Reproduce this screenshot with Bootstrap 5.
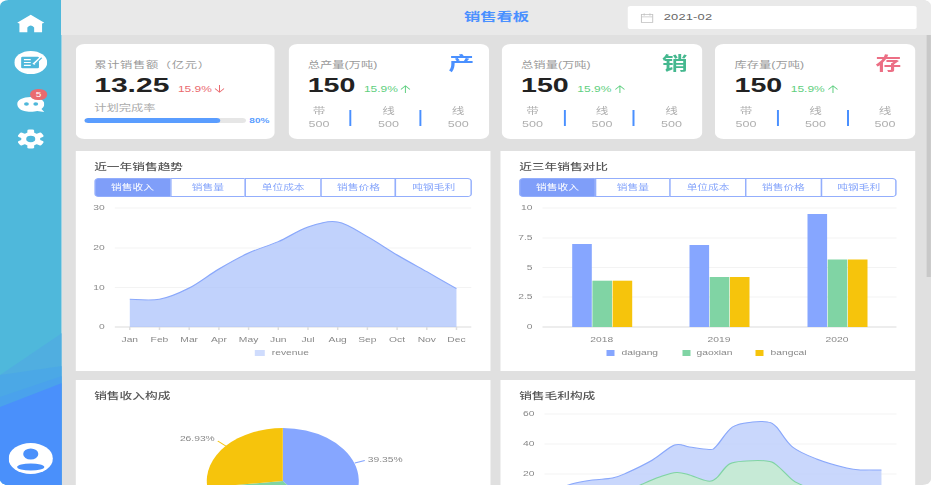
<!DOCTYPE html>
<html lang="zh">
<head>
<meta charset="UTF-8">
<title>销售看板</title>
<link href="https://cdn.jsdelivr.net/npm/bootstrap@5.3.3/dist/css/bootstrap.min.css" rel="stylesheet">
<style>
    html, body { margin: 0; height: 485px; overflow: hidden; background: #fff; }
    body { font-family: "Liberation Sans", "Noto Sans CJK SC", sans-serif; color: #666; }
    /* the reference is a stretched capture, so the page is built narrow and widened */
    .stage { width: 651px; height: 485px; transform: scale(1.43, 1); transform-origin: 0 0; }
    .stage-inner { width: 100%; height: 100%; border-radius: 6px; overflow: hidden; filter: blur(.35px); }
    .side-rail { width: 43.4px; background: #4fb8db; position: relative; flex-shrink: 0; }
    .side-waves { position: absolute; inset: 0; width: 100%; height: 100%; }
    .side-item { position: relative; height: 37px; }
    .side-badge { position: absolute; left: 8.500px; top: -2px; width: 12.500px; height: 11px; border-radius: 6px; background: #ea6a6f; color: #fff; font-size: 7px; line-height: 11px; text-align: center; }
    .main-col { min-width: 0; background: #e0e0e0; }
    .top-bar { height: 35px; background: #e9e9e9; flex-shrink: 0; position: relative; }
    .top-title { color: #4a90ff; font-size: 11.400px; font-weight: 700; }
    .date-box { position: absolute; left: 395.800px; top: 6px; width: 202px; height: 23px; background: #fff; border-radius: 2px; font-size: 9px; color: #666; padding-left: 8.400px; gap: 7.500px; letter-spacing: .15px; }
    .content-wrap { padding: 9px 0 0 9.200px; }
    .stat-row { gap: 9.400px; padding-right: 8px; height: 95px; flex-shrink: 0; margin-bottom: 12px; }
    .stat-box { flex: 1 1 0; min-width: 0; background: #fff; border-radius: 6px; padding: 13.500px 0 0 13.300px; position: relative; }
    .stat-label { font-size: 8.600px; line-height: 15px; color: #999; }
    .stat-label.wide { letter-spacing: .45px; }
    .stat-num { font-size: 20px; font-weight: 700; color: #222; line-height: 24px; white-space: nowrap; }
    .stat-num.first { font-size: 21px; }
    .stat-delta { font-size: 8.400px; margin-left: 6px; font-weight: 400; }
    .stat-delta svg { margin-left: 2px; vertical-align: -1px; }
    .delta-up { color: #5fcf80; }
    .delta-down { color: #ea6a6f; }
    .stat-mark { position: absolute; right: 10px; top: 9px; font-size: 18px; font-weight: 700; line-height: 22px; }
    .plan-label { font-size: 8.600px; color: #aaa; line-height: 12px; margin-top: 1px; }
    .plan-row { margin: 2px 0 0 -6.500px; }
    .plan-bar { height: 5px; width: 112.500px; background: #e6e6e6; border-radius: 3px; overflow: hidden; flex-shrink: 0; }
    .plan-fill { height: 100%; background: #5a9dff; border-radius: 3px; }
    .plan-pct { font-size: 7px; font-weight: 700; color: #5a9dff; margin-left: 2.500px; }
    .split-row { margin: 4.500px 0 0 -13.300px; }
    .split-cell { flex: 1 1 0; text-align: center; font-size: 8.800px; line-height: 13px; color: #b0b0b0; }
    .split-bar + .split-cell { padding-left: 4px; }
    .split-bar { flex-shrink: 0; }
    .panel-row { gap: 7.700px; padding: 0 8.300px 0 .7px; height: 220px; flex-shrink: 0; margin-bottom: 9px; }
    .panel-box { flex: 1 1 0; min-width: 0; background: #fff; height: 220px; }
    .panel-head { padding: 9px 12.600px 0 12.600px; }
    .panel-title { font-size: 8.900px; line-height: 14px; color: #555; font-weight: 500; }
    .tab-set { display: flex; margin-top: 4px; height: 19px; }
    .tab-set .btn { flex: 1 1 0; padding: 0; font-size: 7.500px; line-height: 17px; color: #86a5fb; border: 1px solid #93aefc; border-radius: 0; margin-left: -1px; background: #fff; }
    .tab-set .btn:first-child { margin-left: 0; border-radius: 3px 0 0 3px; background: #7f9ef9; color: #fff; }
    .tab-set .btn:last-child { border-radius: 0 3px 3px 0; }
    .chart-svg { display: block; width: 100%; }
    .chart-svg text { font-size: 7.200px; fill: #888; font-family: "Liberation Sans", sans-serif; }
    .scroll-track { width: 2.800px; flex-shrink: 0; background: #e0e0e0; }
    .scroll-thumb { height: 242px; background: #c8c8c8; }
</style>
</head>
<body>
<div class="stage"><div class="stage-inner d-flex">
    <div class="side-rail d-flex flex-column align-items-center">
        <svg class="side-waves" viewBox="0 0 62 485" preserveAspectRatio="none">
            <polygon points="0,375 62,333 62,485 0,485" fill="#50aee0"/>
            <polygon points="0,375 62,366 62,485 0,485" fill="#4ba8e6"/>
            <polygon points="0,397 62,376 62,485 0,485" fill="#4aa2ec"/>
            <polygon points="0,407 62,383 62,485 0,485" fill="#4a90fb"/>
        </svg>
        <div class="side-item" style="margin-top:11px">
            <svg width="19" height="21" viewBox="0 0 24 24"><path fill="#fff" d="M12 1 L24 11 L22 12 V23 H15 V17 Q12 12 9 17 V23 H2 V12 L0 11Z"/></svg>
        </div>
        <div class="side-item" style="margin-top:2px">
            <svg width="23" height="23" viewBox="0 0 24 24"><circle cx="12" cy="12" r="12" fill="#fff"/><rect x="5" y="6" width="13" height="12" rx="1" fill="#4fb8db"/><path d="M7 9h5M7 12h5M7 15h5" stroke="#fff" stroke-width="1.2"/><path d="M14 14 L20 6" stroke="#fff" stroke-width="2"/><path d="M15 14 L20 7" stroke="#4fb8db" stroke-width="1"/></svg>
        </div>
        <div class="side-item" style="margin-top:4px">
            <svg width="19" height="20" viewBox="0 0 19 20" style="margin-top:3px"><path fill="#fff" d="M9.500 2 C15 2 19 5 19 9 C19 11 18 13 17 14 L19 17 L14 16 C12 17 7 17 5 16 C2 15 0 12 0 9 C0 5 4 2 9.500 2Z"/><circle cx="6.500" cy="9" r="1.700" fill="#4fb8db"/><circle cx="13" cy="9" r="1.700" fill="#4fb8db"/></svg>
            <span class="side-badge">5</span>
        </div>
        <div class="side-item" style="margin-top:-2px">
            <svg width="19" height="20" viewBox="0 0 24 24">
                <g fill="#fff"><rect x="9" y="0" width="6" height="24" rx="1.500"/><rect x="9" y="0" width="6" height="24" rx="1.500" transform="rotate(60 12 12)"/><rect x="9" y="0" width="6" height="24" rx="1.500" transform="rotate(120 12 12)"/><circle cx="12" cy="12" r="8.500"/></g>
                <circle cx="12" cy="12" r="4" fill="#4fb8db"/>
            </svg>
        </div>
        <div class="mt-auto position-relative" style="margin-bottom:11px;height:31px">
            <svg width="31" height="31" viewBox="0 0 31 31"><circle cx="15.500" cy="15.500" r="15.500" fill="#fff"/><ellipse cx="15.500" cy="11" rx="5.300" ry="5.500" fill="#4a90fb"/><ellipse cx="15.500" cy="24" rx="9.500" ry="3.600" fill="#4a90fb"/></svg>
        </div>
    </div>

    <div class="main-col flex-grow-1 d-flex flex-column">
        <div class="top-bar d-flex align-items-center justify-content-center">
            <span class="top-title">销售看板</span>
            <div class="date-box d-flex align-items-center">
                <svg width="9" height="10" viewBox="0 0 9 10"><rect x=".5" y="1.500" width="8" height="8" fill="none" stroke="#c4c4c4" stroke-width=".8"/><path d="M.5 3.800h8M2.500 .5v2M6.500 .5v2" stroke="#c4c4c4" stroke-width=".8"/></svg>
                <span>2021-02</span>
            </div>
        </div>
        <div class="d-flex flex-grow-1" style="min-height:0">
            <div class="content-wrap flex-grow-1 d-flex flex-column" style="min-width:0">
                <div class="stat-row d-flex">
                    <div class="stat-box">
                        <div class="stat-label wide">累计销售额（亿元）</div>
                        <div class="stat-num first">13.25<span class="stat-delta delta-down" id="totalDelta">15.9%</span></div>
                        <div class="plan-label">计划完成率</div>
                        <div class="plan-row d-flex align-items-center">
                            <div class="plan-bar"><div class="plan-fill" style="width:84.5%"></div></div>
                            <span class="plan-pct">80%</span>
                        </div>
                    </div>
                    <div class="stat-box" data-mark="产" data-color="#4a90ff"></div>
                    <div class="stat-box" data-mark="销" data-color="#45b88f"></div>
                    <div class="stat-box" data-mark="存" data-color="#ec6f85"></div>
                </div>
                <div class="panel-row d-flex">
                    <div class="panel-box" id="trendPanel"></div>
                    <div class="panel-box" id="comparePanel"></div>
                </div>
                <div class="panel-row d-flex">
                    <div class="panel-box" id="piePanel"></div>
                    <div class="panel-box" id="marginPanel"></div>
                </div>
            </div>
            <div class="scroll-track"><div class="scroll-thumb"></div></div>
        </div>
    </div>
</div></div>

<script src="https://cdn.jsdelivr.net/npm/bootstrap@5.3.3/dist/js/bootstrap.bundle.min.js"></script>
<script>
// chart data is read in screenshot pixels, S converts x to the unstretched page
const S = 1.43;
const names = { "产": "总产量(万吨)", "销": "总销量(万吨)", "存": "库存量(万吨)" };
const arrowUp = `<svg width="7" height="8" viewBox="0 0 7 8" fill="none" stroke="currentColor" stroke-width=".7"><path d="M.3 4.500 L3.500 .8 L6.700 4.500M3.500 .8V8"/></svg>`;
const arrowDown = `<svg width="7" height="8" viewBox="0 0 7 8" fill="none" stroke="currentColor" stroke-width=".7"><path d="M.3 3.500 L3.500 7.200 L6.700 3.500M3.500 7.200V0"/></svg>`;
const splitBar = `<svg class="split-bar" width="2" height="16" viewBox="0 0 2 16"><rect x=".3" width="1.400" height="16" fill="#4a90ff"/></svg>`;

document.getElementById("totalDelta").innerHTML += arrowDown;

document.querySelectorAll(".stat-box[data-mark]").forEach(box => {
    const mark = box.dataset.mark;
    box.innerHTML = `
        <div class="stat-label">${names[mark]}</div>
        <div class="stat-num">150<span class="stat-delta delta-up">15.9%${arrowUp}</span></div>
        <span class="stat-mark" style="color:${box.dataset.color}">${mark}</span>
        <div class="split-row d-flex align-items-center">
            <div class="split-cell">带<br>500</div>${splitBar}
            <div class="split-cell">线<br>500</div>${splitBar}
            <div class="split-cell">线<br>500</div>
        </div>`;
});

// smooth line through points
function smooth(pts) {
    let d = `M${pts[0][0]} ${pts[0][1]}`;
    for (let i = 0; i < pts.length - 1; i++) {
        const p0 = pts[i - 1] || pts[i], p1 = pts[i], p2 = pts[i + 1], p3 = pts[i + 2] || p2;
        const c1 = [p1[0] + (p2[0] - p0[0]) / 6, p1[1] + (p2[1] - p0[1]) / 6];
        const c2 = [p2[0] - (p3[0] - p1[0]) / 6, p2[1] - (p3[1] - p1[1]) / 6];
        d += ` C${c1[0].toFixed(1)} ${c1[1].toFixed(1)} ${c2[0].toFixed(1)} ${c2[1].toFixed(1)} ${p2[0].toFixed(1)} ${p2[1].toFixed(1)}`;
    }
    return d;
}

// makes helpers that turn screenshot pixels into svg units of one panel
function frame(x0, y0) {
    const px = x => (x - x0) / S;
    const py = y => y - y0;
    return {
        px, py,
        pts: list => list.map(p => [px(p[0]), py(p[1])]),
        grid: (x1, x2, rows) => rows.map(([label, y], i) => `
            <line x1="${px(x1)}" x2="${px(x2)}" y1="${py(y)}" y2="${py(y)}" stroke="${i === rows.length - 1 && rows.axis ? "#dcdcdc" : "#f3f3f3"}"/>
            <text x="${px(x1 - 10)}" y="${py(y) + 2.5}" text-anchor="end">${label}</text>`).join(""),
        label: (text, x, y, anchor = "middle") => `<text x="${px(x)}" y="${py(y) + 2.5}" text-anchor="${anchor}">${text}</text>`,
        swatch: (x, y, w, color) => `<rect x="${px(x)}" y="${py(y)}" width="${w / S}" height="6" fill="${color}"/>`
    };
}

function panel(id, title, tabs, body, height) {
    const tabHtml = tabs ? `<div class="tab-set">${["销售收入", "销售量", "单位成本", "销售价格", "吨钢毛利"].map(t => `<button class="btn" type="button">${t}</button>`).join("")}</div>` : "";
    document.getElementById(id).innerHTML = `
        <div class="panel-head"><div class="panel-title">${title}</div>${tabHtml}</div>
        <svg class="chart-svg" height="${height}">${body}</svg>`;
}

// 近一年销售趋势
{
    const f = frame(76, 197);
    const rows = [["30", 208], ["20", 248], ["10", 287.5], ["0", 327]];
    rows.axis = true;
    const ys = [299.3, 299.3, 288, 269, 253, 241.7, 227, 222, 236.7, 255, 271.7, 288.7];
    const months = ["Jan", "Feb", "Mar", "Apr", "May", "Jun", "Jul", "Aug", "Sep", "Oct", "Nov", "Dec"];
    const xs = months.map((m, i) => 130 + i * 29.7);
    const line = smooth(f.pts(ys.map((y, i) => [xs[i], y])));
    let body = f.grid(115, 471.5, rows);
    body += `<path d="${line} L${f.px(xs[11])} ${f.py(327)} L${f.px(xs[0])} ${f.py(327)}Z" fill="#a9c0fb" fill-opacity=".72"/>`;
    body += `<path d="${line}" fill="none" stroke="#8aa8fb"/>`;
    months.forEach((m, i) => {
        body += `<line x1="${f.px(xs[i])}" x2="${f.px(xs[i])}" y1="${f.py(327)}" y2="${f.py(330)}" stroke="#ddd"/>`;
        body += f.label(m, xs[i], 340);
    });
    body += f.swatch(255, 350, 10, "#cfdcfd") + f.label("revenue", 272, 353, "start");
    panel("trendPanel", "近一年销售趋势", true, body, 165);
}

// 近三年销售对比
{
    const f = frame(501, 197);
    const rows = [["10", 208], ["7.5", 238], ["5", 267.5], ["2.5", 297], ["0", 327]];
    rows.axis = true;
    const colors = ["#86a6ff", "#80d4a4", "#f6c40c"];
    const groups = [["2018", 572.7, [244, 280.7, 280.7]], ["2019", 690, [245, 277, 277]], ["2020", 808, [214, 259.5, 259.5]]];
    let body = f.grid(543, 897, rows);
    groups.forEach(([year, x, tops]) => {
        tops.forEach((top, i) => {
            body += `<rect x="${f.px(x + i * 20.2)}" y="${f.py(top)}" width="${19.6 / S}" height="${327 - top}" fill="${colors[i]}"/>`;
        });
        body += f.label(year, x + 29.5, 340);
    });
    body += f.swatch(607, 350, 8, colors[0]) + f.label("daigang", 622, 353, "start");
    body += f.swatch(683, 350, 8, colors[1]) + f.label("gaoxian", 697, 353, "start");
    body += f.swatch(756, 350, 8, colors[2]) + f.label("bangcai", 771, 353, "start");
    panel("comparePanel", "近三年销售对比", true, body, 165);
}

// 销售收入构成
{
    const f = frame(76, 403);
    const cx = 283, cy = 481, rx = 76, ry = 53;
    const shares = [[39.35, "#86a6ff"], [33.72, "#80d4a4"], [26.93, "#f6c40c"]];
    let start = 0, body = "";
    shares.forEach(([share, color]) => {
        const end = start + share * 3.6;
        const at = a => [f.px(cx + rx * Math.sin(a * Math.PI / 180)), f.py(cy - ry * Math.cos(a * Math.PI / 180))];
        const [x1, y1] = at(start), [x2, y2] = at(end);
        body += `<path d="M${f.px(cx)} ${f.py(cy)} L${x1} ${y1} A${rx / S} ${ry} 0 ${share > 50 ? 1 : 0} 1 ${x2} ${y2}Z" fill="${color}"/>`;
        start = end;
    });
    body += `<polyline points="${f.px(355)},${f.py(463)} ${f.px(365)},${f.py(460.5)}" fill="none" stroke="#86a6ff"/>`;
    body += `<polyline points="${f.px(218)},${f.py(441)} ${f.px(226)},${f.py(446)}" fill="none" stroke="#f6c40c"/>`;
    body += f.label("39.35%", 368, 460, "start") + f.label("26.93%", 215, 439, "end");
    panel("piePanel", "销售收入构成", false, body, 197);
}

// 销售毛利构成
{
    const f = frame(501, 403);
    const rows = [["60", 414], ["40", 444], ["20", 474]];
    const blue = [[556, 490], [572, 484], [593, 480], [613, 478], [627, 473], [653, 460], [675, 445], [690, 447], [710, 449.5], [717, 446], [733, 427], [753, 422], [768, 422], [777, 427], [793, 447], [817, 459], [847, 468], [863, 470], [882, 470]];
    const green = [[620, 495], [643, 484], [660, 477], [677, 472.5], [690, 475], [708, 481], [717, 478], [730, 464], [747, 461], [767, 461], [777, 465], [793, 480], [802, 485], [820, 495]];
    const bl = smooth(f.pts(blue)), gl = smooth(f.pts(green));
    let body = f.grid(545, 897, rows);
    body += `<path d="${bl} L${f.px(882)} ${f.py(505)} L${f.px(556)} ${f.py(505)}Z" fill="#bccdfb" fill-opacity=".8"/>`;
    body += `<path d="${bl}" fill="none" stroke="#8aa8fb"/>`;
    body += `<path d="${gl} L${f.px(820)} ${f.py(505)} L${f.px(620)} ${f.py(505)}Z" fill="#c6ead6"/>`;
    body += `<path d="${gl}" fill="none" stroke="#80d4a4"/>`;
    panel("marginPanel", "销售毛利构成", false, body, 197);
}
</script>
</body>
</html>
